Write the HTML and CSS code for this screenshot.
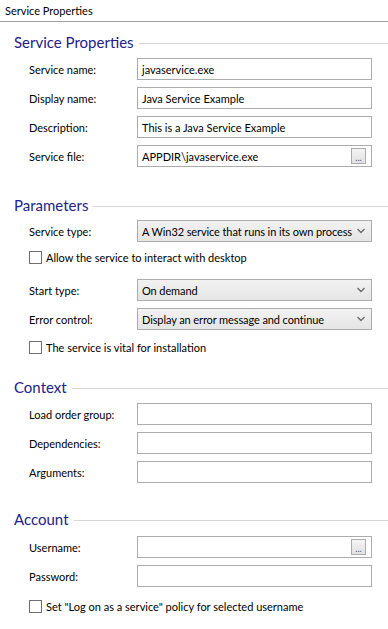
FILE: index.html
```html
<!DOCTYPE html>
<html lang="en">

<head>
    <meta charset="UTF-8">
    <meta name="viewport" content="width=device-width, initial-scale=1.0">
    <title>Service Properties</title>
    <link rel="stylesheet" href="styles.css">
</head>

<body>
    <div class="titlebar">Service Properties</div>

    <div class="section first">
        <h2 class="legend">Service Properties</h2>
        <div class="row">
            <label>Service name:</label>
            <div class="field">javaservice.exe</div>
        </div>
        <div class="row">
            <label>Display name:</label>
            <div class="field">Java Service Example</div>
        </div>
        <div class="row">
            <label>Description:</label>
            <div class="field">This is a Java Service Example</div>
        </div>
        <div class="row">
            <label>Service file:</label>
            <div class="field">APPDIR\javaservice.exe<span class="browse">...</span></div>
        </div>
    </div>

    <div class="section params">
        <h2 class="legend">Parameters</h2>
        <div class="row">
            <label>Service type:</label>
            <div class="select">A Win32 service that runs in its own process
                <svg class="arrow" width="8" height="6" viewBox="0 0 8 6"><path d="M0.5 1 L4 4.5 L7.5 1" fill="none" stroke="#6d6d6d" stroke-width="1.4"/></svg>
            </div>
        </div>
        <div class="check interact"><span class="box"></span>Allow the service to interact with desktop</div>
        <div class="row">
            <label>Start type:</label>
            <div class="select">On demand
                <svg class="arrow" width="8" height="6" viewBox="0 0 8 6"><path d="M0.5 1 L4 4.5 L7.5 1" fill="none" stroke="#6d6d6d" stroke-width="1.4"/></svg>
            </div>
        </div>
        <div class="row">
            <label>Error control:</label>
            <div class="select">Display an error message and continue
                <svg class="arrow" width="8" height="6" viewBox="0 0 8 6"><path d="M0.5 1 L4 4.5 L7.5 1" fill="none" stroke="#6d6d6d" stroke-width="1.4"/></svg>
            </div>
        </div>
        <div class="check vital"><span class="box"></span>The service is vital for installation</div>
    </div>

    <div class="section context">
        <h2 class="legend">Context</h2>
        <div class="row">
            <label>Load order group:</label>
            <div class="field"></div>
        </div>
        <div class="row">
            <label>Dependencies:</label>
            <div class="field"></div>
        </div>
        <div class="row">
            <label>Arguments:</label>
            <div class="field"></div>
        </div>
    </div>

    <div class="section account">
        <h2 class="legend">Account</h2>
        <div class="row">
            <label>Username:</label>
            <div class="field"><span class="browse">...</span></div>
        </div>
        <div class="row">
            <label>Password:</label>
            <div class="field"></div>
        </div>
        <div class="check policy"><span class="box"></span>Set "Log on as a service" policy for selected username</div>
    </div>
</body>

</html>
```

FILE: styles.css
```css
* {
    margin: 0;
    padding: 0;
    box-sizing: border-box;
    font-family: "Segoe UI", Lato, "Noto Sans", Arial, sans-serif;
}

body {
    width: 388px;
    background: #fff;
    color: #000;
    font-size: 11px;
}

.titlebar {
    height: 22px;
    padding: 3px 5px 0;
    border-bottom: 1px solid #a0a0a0;
    line-height: 16px;
}

.section {
    display: flex;
    flex-direction: column;
}

.first {
    margin-top: 10px;
}

.params {
    margin-top: 21px;
}

.context {
    margin-top: 22px;
}

.account {
    margin-top: 19px;
}

.legend {
    display: flex;
    align-items: center;
    height: 20px;
    padding-left: 14px;
    font-size: 15px;
    font-weight: normal;
    color: #22228a;
    margin-bottom: 6px;
}

.legend::after {
    content: "";
    flex: 1;
    height: 1px;
    margin-left: 5px;
    margin-top: 2px;
    background: #d5d5d5;
}

.params .legend {
    margin-bottom: 5px;
}

.account .legend {
    margin-bottom: 7px;
}

.row {
    display: flex;
    align-items: center;
    height: 22px;
    padding-left: 29px;
    margin-bottom: 7px;
}

.row label {
    width: 108px;
}

.field,
.select {
    position: relative;
    display: flex;
    align-items: center;
    width: 235px;
    height: 22px;
    padding-left: 4px;
    border: 1px solid #acacac;
    background: #fff;
    white-space: nowrap;
    overflow: hidden;
}

.select {
    background: linear-gradient(#f2f2f2, #e5e5e5);
    letter-spacing: -0.1px;
}

.arrow {
    position: absolute;
    right: 6px;
    top: 7px;
}

.browse {
    position: absolute;
    right: 5px;
    top: 2px;
    width: 15px;
    height: 16px;
    border: 1px solid #acacac;
    background: linear-gradient(#f4f4f4, #e2e2e2);
    font-size: 9px;
    line-height: 18px;
    text-align: center;
    color: #4a5a7a;
}

.check {
    display: flex;
    align-items: center;
    height: 16px;
    padding-left: 29px;
}

.box {
    width: 13px;
    height: 13px;
    margin-right: 4px;
    border: 1px solid #707070;
    background: #fff;
}

.interact {
    margin-bottom: 14px;
}

.vital {
    margin-top: 2px;
}

.policy {
    margin-top: 4px;
}
```
